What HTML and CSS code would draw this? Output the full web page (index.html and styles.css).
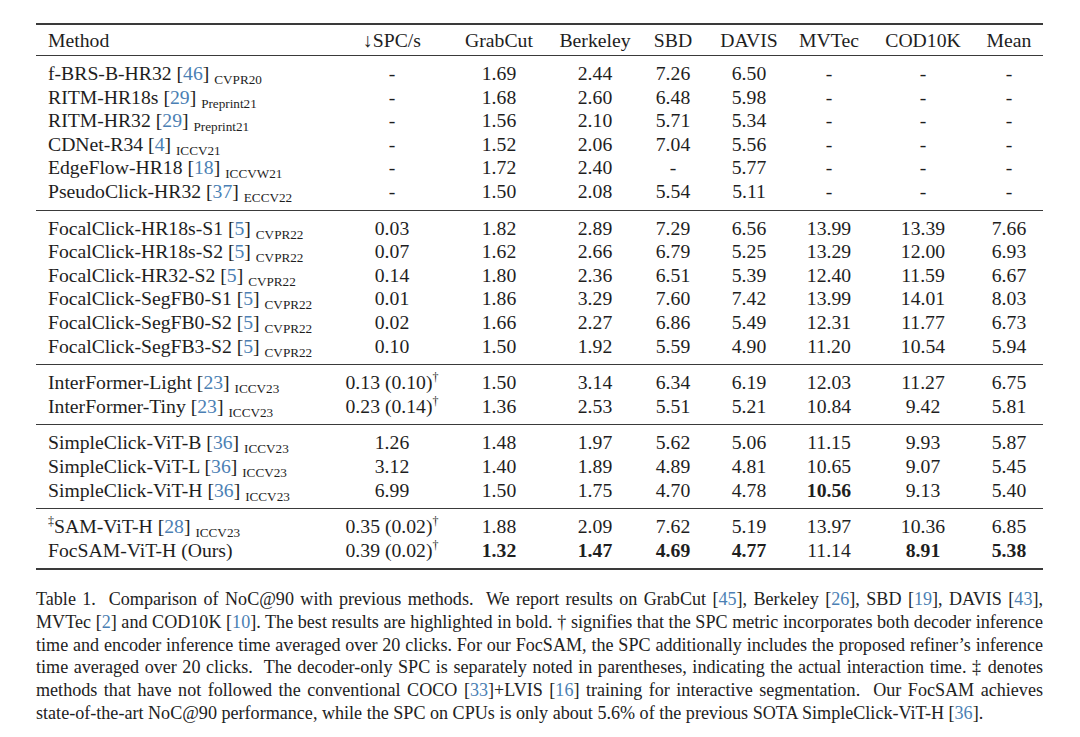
FILE: index.html
```html
<!DOCTYPE html>
<html lang="en">
<head>
    <meta charset="UTF-8">
    <meta name="viewport" content="width=device-width, initial-scale=1.0">
    <title>Table 1. Comparison of NoC@90</title>
    <link rel="stylesheet" href="styles.css">
</head>
<body>
    <div class="page">
        <table class="results">
            <colgroup>
                <col class="c-method">
                <col class="c-spc">
                <col class="c-grab">
                <col class="c-berk">
                <col class="c-sbd">
                <col class="c-davis">
                <col class="c-mvtec">
                <col class="c-cod">
                <col class="c-mean">
            </colgroup>
            <thead>
                <tr>
                    <th class="method">Method</th>
                    <th>&darr;SPC/s</th>
                    <th>GrabCut</th>
                    <th>Berkeley</th>
                    <th>SBD</th>
                    <th>DAVIS</th>
                    <th>MVTec</th>
                    <th>COD10K</th>
                    <th>Mean</th>
                </tr>
            </thead>
            <tbody>
                <tr>
                    <td class="method">f-BRS-B-HR32 [<span class="cite">46</span>] <sub>CVPR20</sub></td>
                    <td>-</td><td>1.69</td><td>2.44</td><td>7.26</td><td>6.50</td><td>-</td><td>-</td><td>-</td>
                </tr>
                <tr>
                    <td class="method">RITM-HR18s [<span class="cite">29</span>] <sub>Preprint21</sub></td>
                    <td>-</td><td>1.68</td><td>2.60</td><td>6.48</td><td>5.98</td><td>-</td><td>-</td><td>-</td>
                </tr>
                <tr>
                    <td class="method">RITM-HR32 [<span class="cite">29</span>] <sub>Preprint21</sub></td>
                    <td>-</td><td>1.56</td><td>2.10</td><td>5.71</td><td>5.34</td><td>-</td><td>-</td><td>-</td>
                </tr>
                <tr>
                    <td class="method">CDNet-R34 [<span class="cite">4</span>] <sub>ICCV21</sub></td>
                    <td>-</td><td>1.52</td><td>2.06</td><td>7.04</td><td>5.56</td><td>-</td><td>-</td><td>-</td>
                </tr>
                <tr>
                    <td class="method">EdgeFlow-HR18 [<span class="cite">18</span>] <sub>ICCVW21</sub></td>
                    <td>-</td><td>1.72</td><td>2.40</td><td>-</td><td>5.77</td><td>-</td><td>-</td><td>-</td>
                </tr>
                <tr>
                    <td class="method">PseudoClick-HR32 [<span class="cite">37</span>] <sub>ECCV22</sub></td>
                    <td>-</td><td>1.50</td><td>2.08</td><td>5.54</td><td>5.11</td><td>-</td><td>-</td><td>-</td>
                </tr>
            </tbody>
            <tbody>
                <tr>
                    <td class="method">FocalClick-HR18s-S1 [<span class="cite">5</span>] <sub>CVPR22</sub></td>
                    <td>0.03</td><td>1.82</td><td>2.89</td><td>7.29</td><td>6.56</td><td>13.99</td><td>13.39</td><td>7.66</td>
                </tr>
                <tr>
                    <td class="method">FocalClick-HR18s-S2 [<span class="cite">5</span>] <sub>CVPR22</sub></td>
                    <td>0.07</td><td>1.62</td><td>2.66</td><td>6.79</td><td>5.25</td><td>13.29</td><td>12.00</td><td>6.93</td>
                </tr>
                <tr>
                    <td class="method">FocalClick-HR32-S2 [<span class="cite">5</span>] <sub>CVPR22</sub></td>
                    <td>0.14</td><td>1.80</td><td>2.36</td><td>6.51</td><td>5.39</td><td>12.40</td><td>11.59</td><td>6.67</td>
                </tr>
                <tr>
                    <td class="method">FocalClick-SegFB0-S1 [<span class="cite">5</span>] <sub>CVPR22</sub></td>
                    <td>0.01</td><td>1.86</td><td>3.29</td><td>7.60</td><td>7.42</td><td>13.99</td><td>14.01</td><td>8.03</td>
                </tr>
                <tr>
                    <td class="method">FocalClick-SegFB0-S2 [<span class="cite">5</span>] <sub>CVPR22</sub></td>
                    <td>0.02</td><td>1.66</td><td>2.27</td><td>6.86</td><td>5.49</td><td>12.31</td><td>11.77</td><td>6.73</td>
                </tr>
                <tr>
                    <td class="method">FocalClick-SegFB3-S2 [<span class="cite">5</span>] <sub>CVPR22</sub></td>
                    <td>0.10</td><td>1.50</td><td>1.92</td><td>5.59</td><td>4.90</td><td>11.20</td><td>10.54</td><td>5.94</td>
                </tr>
            </tbody>
            <tbody>
                <tr>
                    <td class="method">InterFormer-Light [<span class="cite">23</span>] <sub>ICCV23</sub></td>
                    <td>0.13 (0.10)<sup>&dagger;</sup></td><td>1.50</td><td>3.14</td><td>6.34</td><td>6.19</td><td>12.03</td><td>11.27</td><td>6.75</td>
                </tr>
                <tr>
                    <td class="method">InterFormer-Tiny [<span class="cite">23</span>] <sub>ICCV23</sub></td>
                    <td>0.23 (0.14)<sup>&dagger;</sup></td><td>1.36</td><td>2.53</td><td>5.51</td><td>5.21</td><td>10.84</td><td>9.42</td><td>5.81</td>
                </tr>
            </tbody>
            <tbody>
                <tr>
                    <td class="method">SimpleClick-ViT-B [<span class="cite">36</span>] <sub>ICCV23</sub></td>
                    <td>1.26</td><td>1.48</td><td>1.97</td><td>5.62</td><td>5.06</td><td>11.15</td><td>9.93</td><td>5.87</td>
                </tr>
                <tr>
                    <td class="method">SimpleClick-ViT-L [<span class="cite">36</span>] <sub>ICCV23</sub></td>
                    <td>3.12</td><td>1.40</td><td>1.89</td><td>4.89</td><td>4.81</td><td>10.65</td><td>9.07</td><td>5.45</td>
                </tr>
                <tr>
                    <td class="method">SimpleClick-ViT-H [<span class="cite">36</span>] <sub>ICCV23</sub></td>
                    <td>6.99</td><td>1.50</td><td>1.75</td><td>4.70</td><td>4.78</td><td class="best">10.56</td><td>9.13</td><td>5.40</td>
                </tr>
            </tbody>
            <tbody>
                <tr>
                    <td class="method"><sup>&Dagger;</sup>SAM-ViT-H [<span class="cite">28</span>] <sub>ICCV23</sub></td>
                    <td>0.35 (0.02)<sup>&dagger;</sup></td><td>1.88</td><td>2.09</td><td>7.62</td><td>5.19</td><td>13.97</td><td>10.36</td><td>6.85</td>
                </tr>
                <tr>
                    <td class="method">FocSAM-ViT-H (Ours)</td>
                    <td>0.39 (0.02)<sup>&dagger;</sup></td><td class="best">1.32</td><td class="best">1.47</td><td class="best">4.69</td><td class="best">4.77</td><td>11.14</td><td class="best">8.91</td><td class="best">5.38</td>
                </tr>
            </tbody>
        </table>

        <p class="caption">
            <span class="line">Table 1.&nbsp; Comparison of NoC@90 with previous methods.&nbsp; We report results on GrabCut [<span class="cite">45</span>], Berkeley [<span class="cite">26</span>], SBD [<span class="cite">19</span>], DAVIS [<span class="cite">43</span>],</span>
            <span class="line">MVTec [<span class="cite">2</span>] and COD10K [<span class="cite">10</span>]. The best results are highlighted in bold. &dagger; signifies that the SPC metric incorporates both decoder inference</span>
            <span class="line">time and encoder inference time averaged over 20 clicks. For our FocSAM, the SPC additionally includes the proposed refiner&rsquo;s inference</span>
            <span class="line">time averaged over 20 clicks.&nbsp; The decoder-only SPC is separately noted in parentheses, indicating the actual interaction time. &Dagger; denotes</span>
            <span class="line">methods that have not followed the conventional COCO [<span class="cite">33</span>]+LVIS [<span class="cite">16</span>] training for interactive segmentation.&nbsp; Our FocSAM achieves</span>
            <span class="line last">state-of-the-art NoC@90 performance, while the SPC on CPUs is only about 5.6% of the previous SOTA SimpleClick-ViT-H [<span class="cite">36</span>].</span>
        </p>
    </div>
</body>
</html>
```

FILE: styles.css
```css
body {
    margin: 0;
    padding: 0;
    background: #fff;
    font-family: "Liberation Serif", "Times New Roman", serif;
    color: #1e1e1e;
}

.page {
    padding: 23px 37px 0 36px;
}

.results {
    width: 1007px;
    border-collapse: collapse;
    table-layout: fixed;
    font-size: 19.7px;
    border-top: 2px solid #3a3a3a;
    border-bottom: 2px solid #3a3a3a;
}

.c-method { width: 305px; }
.c-spc { width: 102px; }
.c-grab { width: 112px; }
.c-berk { width: 80px; }
.c-sbd { width: 76px; }
.c-davis { width: 76px; }
.c-mvtec { width: 84px; }
.c-cod { width: 104px; }
.c-mean { width: 68px; }

.results th,
.results td {
    padding: 0;
    text-align: center;
    font-weight: normal;
    line-height: 23.6px;
    white-space: nowrap;
}

.results th {
    height: 30px;
    line-height: 30px;
}

.results thead tr {
    border-bottom: 1px solid #3a3a3a;
}

.results tbody + tbody {
    border-top: 1px solid #3a3a3a;
}

.results tbody tr:first-child td {
    padding-top: 6px;
}

.results tbody tr:last-child td {
    padding-bottom: 6px;
}

.results .method {
    text-align: left;
    padding-left: 12px;
}

.results .best {
    font-weight: bold;
}

.cite {
    color: #4b7fb4;
}

sub {
    font-size: 13.2px;
    vertical-align: -4px;
    line-height: 0;
}

sup {
    font-size: 12px;
    vertical-align: 8px;
    line-height: 0;
}

.caption {
    margin: 18px 0 0 0;
    font-size: 18.1px;
    line-height: 22.7px;
    color: #222;
}

.caption .line {
    display: block;
    text-align: justify;
    text-align-last: justify;
}

.caption .line.last {
    text-align-last: left;
}
```
